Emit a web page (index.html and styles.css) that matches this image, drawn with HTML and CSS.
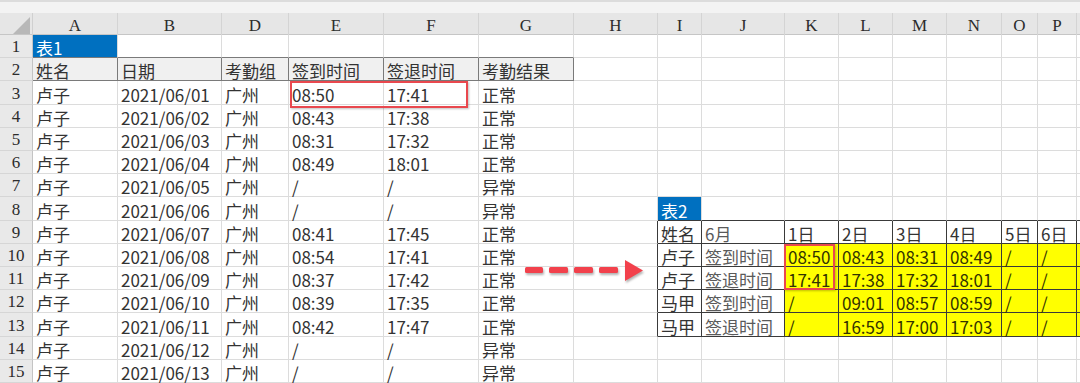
FILE: index.html
```html
<!DOCTYPE html>
<html lang="zh-CN">
<head>
<meta charset="utf-8">
<title>考勤表</title>
<link rel="stylesheet" href="styles.css">
</head>
<body>
<div class="topbar"></div>
<div class="sheet">
  <div class="row colhead">
    <div class="corner"><span class="tri"></span></div>
    <div class="ch">A</div><div class="ch">B</div><div class="ch">D</div><div class="ch">E</div><div class="ch">F</div><div class="ch">G</div><div class="ch">H</div><div class="ch">I</div><div class="ch">J</div><div class="ch">K</div><div class="ch">L</div><div class="ch">M</div><div class="ch">N</div><div class="ch">O</div><div class="ch">P</div><div class="ch"></div>
  </div>

  <div class="row">
    <div class="rh">1</div>
    <div class="c title db">表1</div><div class="c db"></div><div class="c db"></div><div class="c db"></div><div class="c db"></div><div class="c db"></div>
    <div class="c"></div><div class="c"></div><div class="c"></div><div class="c"></div><div class="c"></div><div class="c"></div><div class="c"></div><div class="c"></div><div class="c"></div><div class="c"></div>
  </div>

  <div class="row">
    <div class="rh">2</div>
    <div class="c th">姓名</div><div class="c th">日期</div><div class="c th">考勤组</div><div class="c th">签到时间</div><div class="c th">签退时间</div><div class="c th">考勤结果</div>
    <div class="c"></div><div class="c"></div><div class="c"></div><div class="c"></div><div class="c"></div><div class="c"></div><div class="c"></div><div class="c"></div><div class="c"></div><div class="c"></div>
  </div>

  <div class="row tall">
    <div class="rh">3</div>
    <div class="c">卢子</div><div class="c">2021/06/01</div><div class="c">广州</div><div class="c">08:50</div><div class="c">17:41</div><div class="c">正常</div>
    <div class="c"></div><div class="c"></div><div class="c"></div><div class="c"></div><div class="c"></div><div class="c"></div><div class="c"></div><div class="c"></div><div class="c"></div><div class="c"></div>
  </div>

  <div class="row">
    <div class="rh">4</div>
    <div class="c">卢子</div><div class="c">2021/06/02</div><div class="c">广州</div><div class="c">08:43</div><div class="c">17:38</div><div class="c">正常</div>
    <div class="c"></div><div class="c"></div><div class="c"></div><div class="c"></div><div class="c"></div><div class="c"></div><div class="c"></div><div class="c"></div><div class="c"></div><div class="c"></div>
  </div>

  <div class="row">
    <div class="rh">5</div>
    <div class="c">卢子</div><div class="c">2021/06/03</div><div class="c">广州</div><div class="c">08:31</div><div class="c">17:32</div><div class="c">正常</div>
    <div class="c"></div><div class="c"></div><div class="c"></div><div class="c"></div><div class="c"></div><div class="c"></div><div class="c"></div><div class="c"></div><div class="c"></div><div class="c"></div>
  </div>

  <div class="row">
    <div class="rh">6</div>
    <div class="c">卢子</div><div class="c">2021/06/04</div><div class="c">广州</div><div class="c">08:49</div><div class="c">18:01</div><div class="c">正常</div>
    <div class="c"></div><div class="c"></div><div class="c"></div><div class="c"></div><div class="c"></div><div class="c"></div><div class="c"></div><div class="c"></div><div class="c"></div><div class="c"></div>
  </div>

  <div class="row">
    <div class="rh">7</div>
    <div class="c">卢子</div><div class="c">2021/06/05</div><div class="c">广州</div><div class="c">/</div><div class="c">/</div><div class="c">异常</div>
    <div class="c"></div><div class="c"></div><div class="c"></div><div class="c"></div><div class="c"></div><div class="c"></div><div class="c"></div><div class="c"></div><div class="c"></div><div class="c"></div>
  </div>

  <div class="row tall">
    <div class="rh">8</div>
    <div class="c">卢子</div><div class="c">2021/06/06</div><div class="c">广州</div><div class="c">/</div><div class="c">/</div><div class="c">异常</div>
    <div class="c"></div><div class="c title db2">表2</div><div class="c db2"></div><div class="c db2"></div><div class="c db2"></div><div class="c db2"></div><div class="c db2"></div><div class="c db2"></div><div class="c db2"></div><div class="c db2"></div>
  </div>

  <div class="row">
    <div class="rh">9</div>
    <div class="c">卢子</div><div class="c">2021/06/07</div><div class="c">广州</div><div class="c">08:41</div><div class="c">17:45</div><div class="c">正常</div>
    <div class="c dr2"></div>
    <div class="c t2">姓名</div><div class="c t2 sub">6月</div><div class="c t2">1日</div><div class="c t2">2日</div><div class="c t2">3日</div><div class="c t2">4日</div><div class="c t2">5日</div><div class="c t2">6日</div><div class="c t2"></div>
  </div>

  <div class="row">
    <div class="rh">10</div>
    <div class="c">卢子</div><div class="c">2021/06/08</div><div class="c">广州</div><div class="c">08:54</div><div class="c">17:41</div><div class="c">正常</div>
    <div class="c dr2"></div>
    <div class="c t2">卢子</div><div class="c t2 sub">签到时间</div><div class="c t2 y">08:50</div><div class="c t2 y">08:43</div><div class="c t2 y">08:31</div><div class="c t2 y">08:49</div><div class="c t2 y">/</div><div class="c t2 y">/</div><div class="c t2 y"></div>
  </div>

  <div class="row">
    <div class="rh">11</div>
    <div class="c">卢子</div><div class="c">2021/06/09</div><div class="c">广州</div><div class="c">08:37</div><div class="c">17:42</div><div class="c">正常</div>
    <div class="c dr2"></div>
    <div class="c t2">卢子</div><div class="c t2 sub">签退时间</div><div class="c t2 y">17:41</div><div class="c t2 y">17:38</div><div class="c t2 y">17:32</div><div class="c t2 y">18:01</div><div class="c t2 y">/</div><div class="c t2 y">/</div><div class="c t2 y"></div>
  </div>

  <div class="row">
    <div class="rh">12</div>
    <div class="c">卢子</div><div class="c">2021/06/10</div><div class="c">广州</div><div class="c">08:39</div><div class="c">17:35</div><div class="c">正常</div>
    <div class="c dr2"></div>
    <div class="c t2">马甲</div><div class="c t2 sub">签到时间</div><div class="c t2 y">/</div><div class="c t2 y">09:01</div><div class="c t2 y">08:57</div><div class="c t2 y">08:59</div><div class="c t2 y">/</div><div class="c t2 y">/</div><div class="c t2 y"></div>
  </div>

  <div class="row tall">
    <div class="rh">13</div>
    <div class="c">卢子</div><div class="c">2021/06/11</div><div class="c">广州</div><div class="c">08:42</div><div class="c">17:47</div><div class="c">正常</div>
    <div class="c dr2"></div>
    <div class="c t2">马甲</div><div class="c t2 sub">签退时间</div><div class="c t2 y">/</div><div class="c t2 y">16:59</div><div class="c t2 y">17:00</div><div class="c t2 y">17:03</div><div class="c t2 y">/</div><div class="c t2 y">/</div><div class="c t2 y"></div>
  </div>

  <div class="row">
    <div class="rh">14</div>
    <div class="c">卢子</div><div class="c">2021/06/12</div><div class="c">广州</div><div class="c">/</div><div class="c">/</div><div class="c">异常</div>
    <div class="c"></div><div class="c"></div><div class="c"></div><div class="c"></div><div class="c"></div><div class="c"></div><div class="c"></div><div class="c"></div><div class="c"></div><div class="c"></div>
  </div>

  <div class="row">
    <div class="rh">15</div>
    <div class="c">卢子</div><div class="c">2021/06/13</div><div class="c">广州</div><div class="c">/</div><div class="c">/</div><div class="c">异常</div>
    <div class="c"></div><div class="c"></div><div class="c"></div><div class="c"></div><div class="c"></div><div class="c"></div><div class="c"></div><div class="c"></div><div class="c"></div><div class="c"></div>
  </div>

  <div class="mark mark-1"></div>
  <div class="mark mark-2"></div>
  <svg class="arrow" width="130" height="30" viewBox="0 0 130 30" aria-hidden="true">
    <rect x="5" y="12" width="18" height="6" rx="1.5"/>
    <rect x="29" y="12" width="19" height="6" rx="1.5"/>
    <rect x="54" y="12" width="19" height="6" rx="1.5"/>
    <rect x="79" y="12" width="19" height="6" rx="1.5"/>
    <polygon points="105,5 123,15.5 105,26"/>
  </svg>
</div>
</body>
</html>
```

FILE: styles.css
```css
* { box-sizing: border-box; }

html, body {
  margin: 0;
  padding: 0;
  background: #ffffff;
  overflow: hidden;
}

body {
  width: 1080px;
  height: 383px;
  font-family: "Noto Sans CJK SC", "Noto Sans", sans-serif;
  font-size: 17px;
  color: #333333;
}

.topbar {
  height: 13px;
  background: #f3f3f3;
  border-top: 2px solid #dcdcdc;
}

.sheet {
  position: relative;
  width: 1080px;
}

.row {
  display: grid;
  grid-template-columns: 33px 85px 104px 67px 95px 95px 95px 84px 44px 83px 54px 54px 54px 55px 36px 39px 3px;
  height: 23px;
}

.row > :last-child {
  padding: 0;
  border-right: 0;
  min-width: 0;
}

.row.tall { height: 24px; }

.row.colhead {
  height: 22px;
  background: #e6e6e6;
  border-bottom: 1px solid #c6c6c6;
}

.corner {
  border-right: 1px solid #d0d0d0;
  display: flex;
  justify-content: flex-end;
  align-items: flex-end;
  padding: 0 2px 2px 0;
}

.tri {
  width: 0;
  height: 0;
  border-left: 17px solid transparent;
  border-bottom: 17px solid #b8b8b8;
}

.ch {
  font-family: "Liberation Serif", "DejaVu Serif", serif;
  font-size: 17px;
  color: #2c2c2c;
  display: flex;
  justify-content: center;
  align-items: center;
  padding-top: 3px;
  border-right: 1px solid #d4d4d4;
}

.rh {
  font-family: "Liberation Serif", "DejaVu Serif", serif;
  font-size: 17px;
  color: #2c2c2c;
  background: #e9e9e9;
  border-right: 1px solid #c4c4c4;
  border-bottom: 1px solid #d6d6d6;
  display: flex;
  justify-content: center;
  align-items: center;
  padding-top: 2px;
}

.c {
  border-right: 1px solid #dcdcdc;
  border-bottom: 1px solid #dcdcdc;
  padding: 0 3px 1px;
  display: flex;
  align-items: flex-end;
  white-space: nowrap;
  line-height: 17px;
}

.title {
  background: #0070c0;
  color: #ffffff;
}

.db { border-bottom-color: #7a7a7a; }

.th {
  background: #f0f0f0;
  border-right-color: #7a7a7a;
  border-bottom-color: #7a7a7a;
}

.db2 { border-bottom-color: #3a3a3a; }
.dr2 { border-right-color: #3a3a3a; }

.t2 {
  border-right-color: #3a3a3a;
  border-bottom-color: #3a3a3a;
}

.sub { color: #5a5a5a; }

.y {
  background: #ffff00;
  color: #333300;
}

.mark {
  position: absolute;
  border: 2px solid #e9484e;
  box-shadow: 1px 1px 2px rgba(0, 0, 0, 0.25);
  pointer-events: none;
}

.mark-1 {
  left: 290px;
  top: 68px;
  width: 178px;
  height: 27px;
}

.mark-2 {
  left: 784px;
  top: 231px;
  width: 51px;
  height: 46px;
}

.arrow {
  position: absolute;
  left: 520px;
  top: 242px;
  fill: #f2414c;
  filter: drop-shadow(1px 2px 1px rgba(0, 0, 0, 0.3));
}
```
